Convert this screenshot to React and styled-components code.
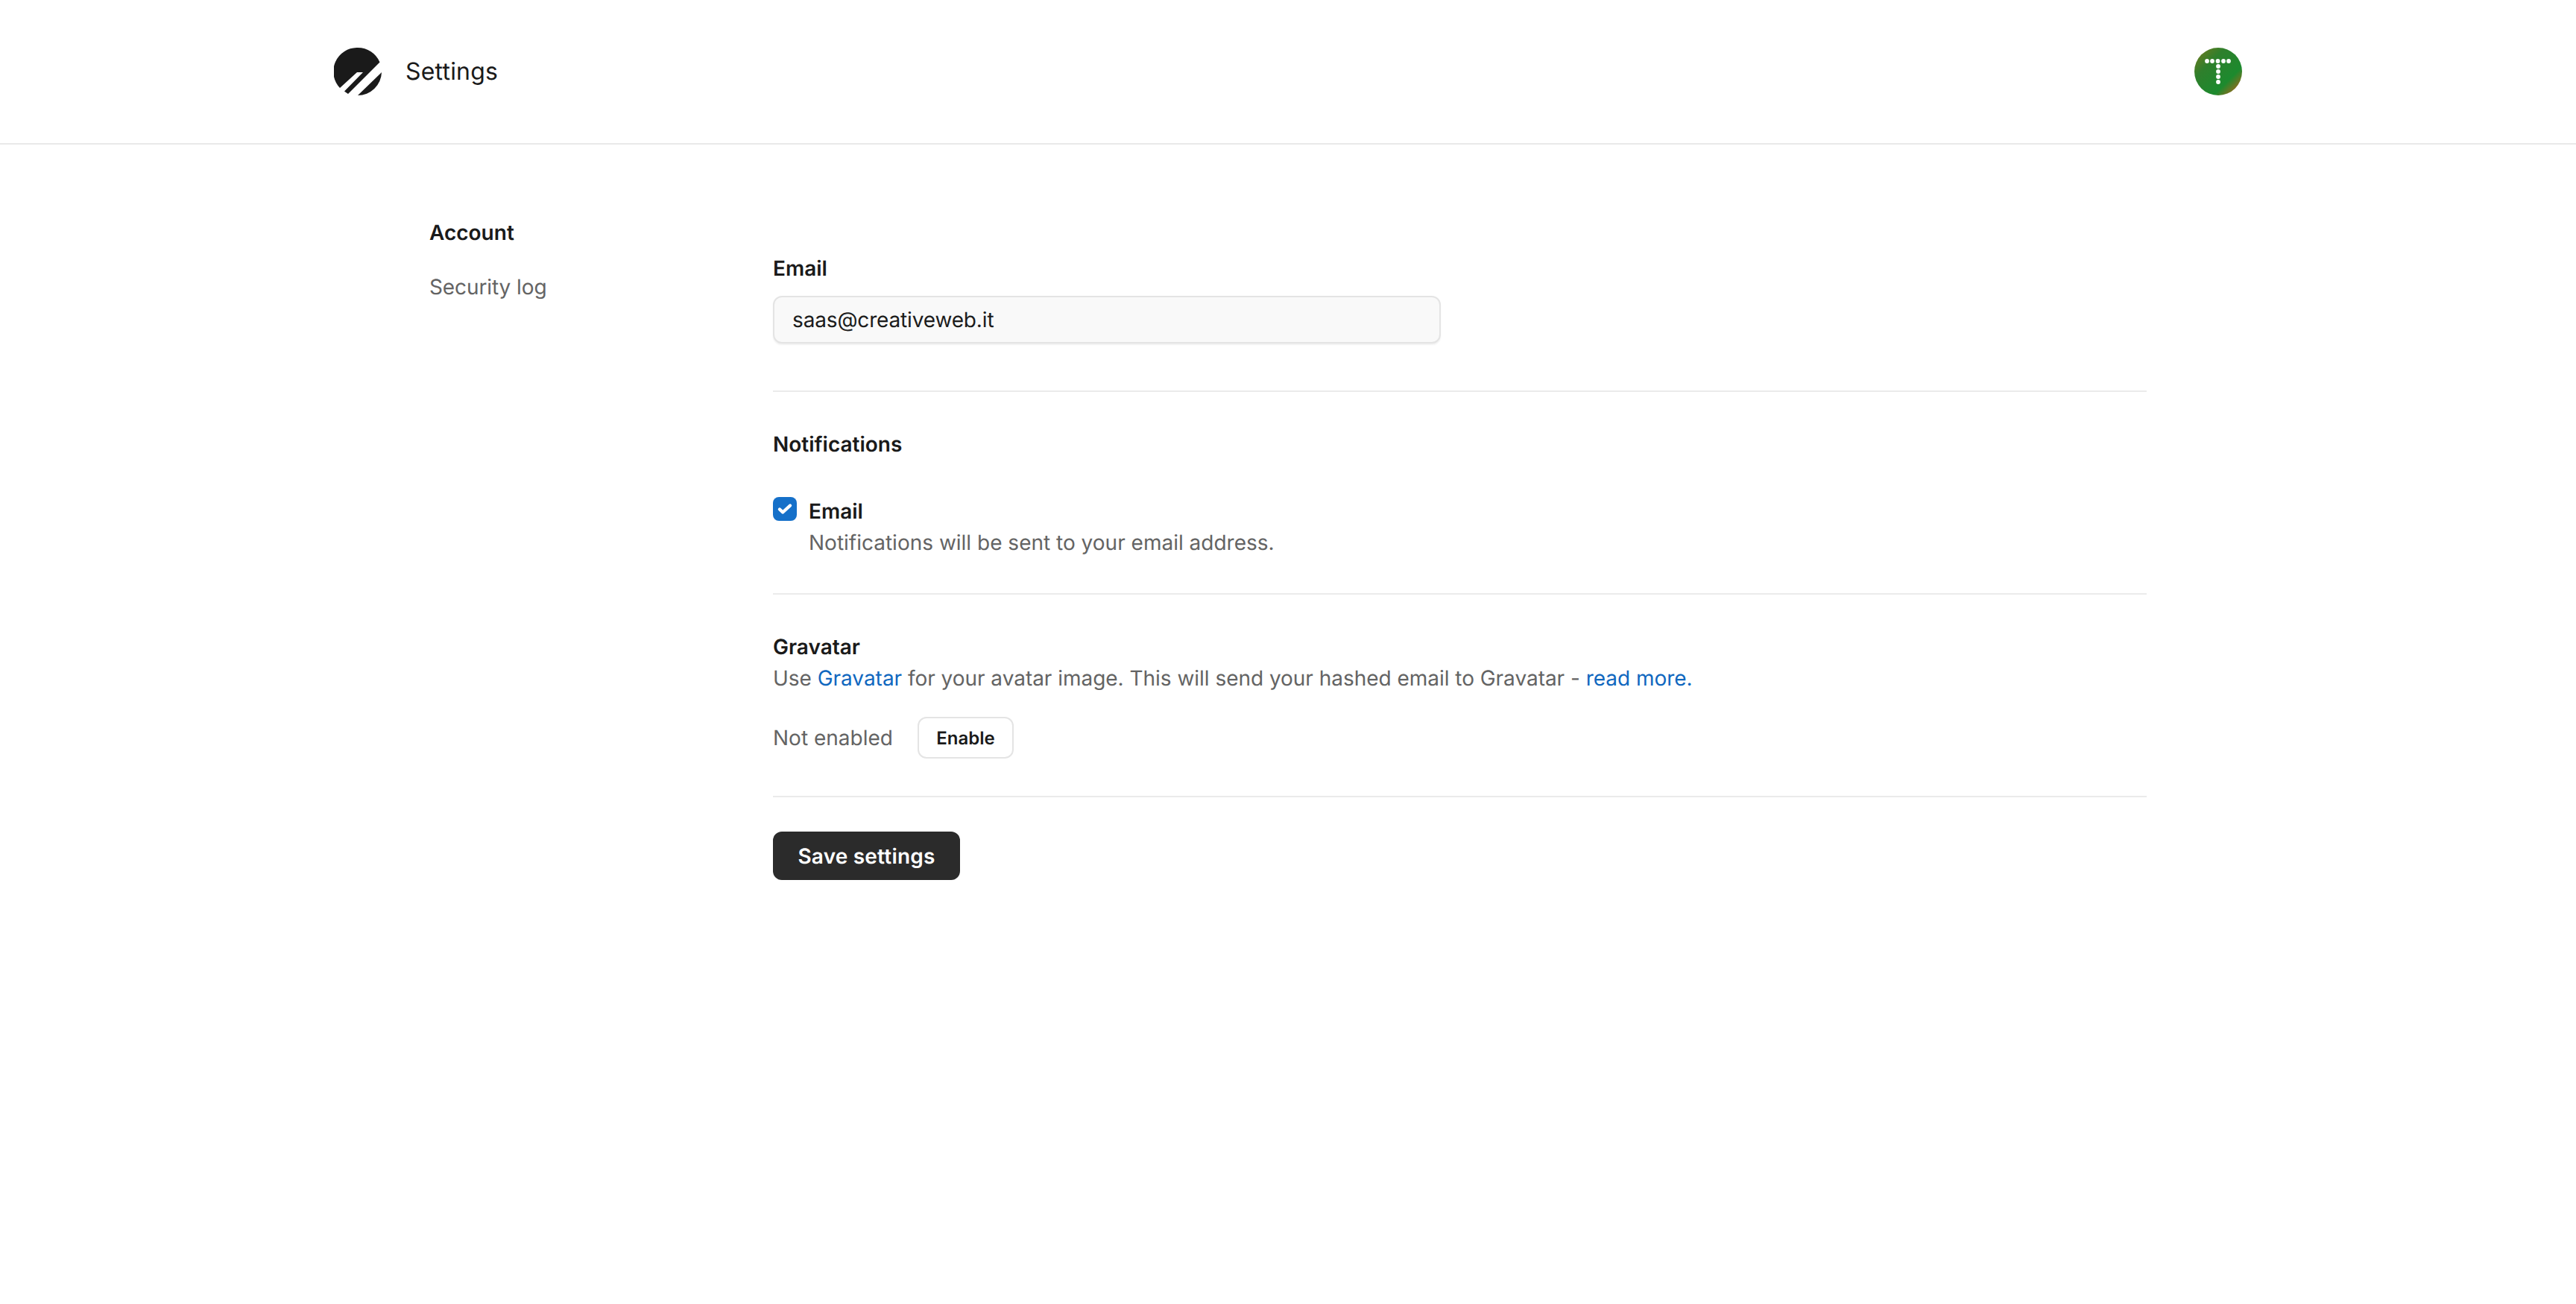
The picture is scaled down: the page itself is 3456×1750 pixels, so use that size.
import React from "react";
import styled, { createGlobalStyle } from "styled-components";

const Global = createGlobalStyle`
  html, body { margin: 0; padding: 0; background: #fff; }
  body { font-family: Inter, "Liberation Sans", sans-serif; color: #1c1c1c; font-size: 28px; line-height: 40px; text-rendering: geometricPrecision; }
  * { box-sizing: border-box; }
`;

const Header = styled.header`
  height: 194px;
  border-bottom: 2px solid #e9e9e9;
  padding: 0 448px;
  display: flex;
  align-items: center;
  justify-content: space-between;
`;
const Brand = styled.div`
  display: flex;
  align-items: center;
  gap: 32px;
`;
const Title = styled.h1`
  margin: 0;
  font-size: 32px;
  line-height: 48px;
  font-weight: 400;
  letter-spacing: 0.2px;
  color: #1a1a1a;
`;
const Main = styled.main`
  display: flex;
  padding: 0 576px;
`;
const Side = styled.nav`
  width: 461px;
  flex: none;
  padding-top: 98px;
  display: flex;
  flex-direction: column;
  gap: 33px;
`;
const SideLink = styled.a`
  font-size: 28px;
  line-height: 40px;
  font-weight: ${(p) => (p.$active ? 600 : 400)};
  letter-spacing: ${(p) => (p.$active ? "0" : "-0.1px")};
  color: ${(p) => (p.$active ? "#1a1a1a" : "#646464")};
`;
const Content = styled.div`
  flex: 1;
  padding-top: 146px;
`;
const Section = styled.section`
  padding-bottom: ${(p) => p.$pb}px;
  margin-bottom: ${(p) => p.$mb}px;
  border-bottom: 2px solid #ebebeb;
`;
const Label = styled.div`
  font-weight: 600;
  font-size: 28px;
  line-height: 40px;
  color: #1a1a1a;
`;
const Input = styled.input`
  display: block;
  width: 896px;
  height: 64px;
  margin-top: 17px;
  padding: 0 24px;
  font: 400 28px Inter, "Liberation Sans", sans-serif;
  letter-spacing: -0.15px;
  text-rendering: geometricPrecision;
  color: #1c1c1c;
  background: #f9f9f9;
  border: 2px solid #e4e4e4;
  border-radius: 12px;
  box-shadow: 0 2px 2px rgba(0, 0, 0, 0.06);
  outline: none;
`;
const CheckRow = styled.div`
  display: flex;
  gap: 16px;
  margin-top: 50px;
`;
const Box = styled.span`
  width: 32px;
  height: 32px;
  flex: none;
  margin-top: 1px;
  border-radius: 8px;
  background: #1570c9;
  display: flex;
  align-items: center;
  justify-content: center;
`;
const Muted = styled.div`
  color: #646464;
  font-size: 28px;
  line-height: 40px;
  margin-top: ${(p) => p.$mt || 0}px;
  letter-spacing: ${(p) => p.$ls || 0}px;
`;
const Link = styled.a`
  color: #1068bf;
`;
const EnableRow = styled.div`
  display: flex;
  align-items: center;
  gap: 33px;
  margin-top: 32px;
`;
const GhostButton = styled.button`
  height: 56px;
  width: 129px;
  padding: 0;
  background: #fff;
  border: 2px solid #e4e4e4;
  border-radius: 12px;
  font: 600 24px Inter, "Liberation Sans", sans-serif;
  text-rendering: geometricPrecision;
  color: #1a1a1a;
`;
const SaveButton = styled.button`
  height: 65px;
  width: 251px;
  padding: 0;
  border: 0;
  border-radius: 12px;
  background: #2b2b2b;
  color: #fff;
  font: 600 28px Inter, "Liberation Sans", sans-serif;
  letter-spacing: 0.2px;
  text-rendering: geometricPrecision;
`;

const Logo = () => (
  <svg width="64" height="64" viewBox="0 0 64 64">
    <path
      fill="#1a1a1a"
      d="M32 0A32 32 0 0 1 61.5 19.5L19 62A32 32 0 0 1 14 58.5L39 33H31L8 54A32 32 0 0 1 32 0Z"
    />
    <path fill="#1a1a1a" d="M64 33A32 32 0 0 1 32 64H32L64 33Z" />
  </svg>
);

const Avatar = () => {
  const dots = [
    [17, 18], [24, 18], [31.5, 18], [39, 18], [46, 18],
    [32, 25], [32, 32], [32, 39], [32, 46],
  ];
  return (
    <svg width="64" height="64" viewBox="0 0 64 64">
      <defs>
        <linearGradient id="av" x1="0" y1="0" x2="1" y2="1">
          <stop offset="0" stopColor="#7a7a1c" />
          <stop offset="0.32" stopColor="#2f7f2c" />
          <stop offset="0.7" stopColor="#1c8a2e" />
          <stop offset="0.92" stopColor="#a8661c" />
        </linearGradient>
      </defs>
      <circle cx="32" cy="32" r="32" fill="url(#av)" />
      {dots.map(([x, y]) => (
        <circle key={`${x}-${y}`} cx={x} cy={y} r="2.9" fill="#fff" />
      ))}
    </svg>
  );
};

export default function App() {
  return (
    <>
      <Global />
      <Header>
        <Brand>
          <Logo />
          <Title>Settings</Title>
        </Brand>
        <Avatar />
      </Header>
      <Main>
        <Side>
          <SideLink $active>Account</SideLink>
          <SideLink>Security log</SideLink>
        </Side>
        <Content>
          <Section $pb={63} $mb={50}>
            <Label>Email</Label>
            <Input readOnly value="saas@creativeweb.it" />
          </Section>
          <Section $pb={48} $mb={50}>
            <Label>Notifications</Label>
            <CheckRow>
              <Box>
                <svg width="22" height="22" viewBox="0 0 22 22">
                  <path d="M4 11.5l4.2 4L18 6.5" fill="none" stroke="#fff" strokeWidth="4.4" strokeLinecap="round" strokeLinejoin="round" />
                </svg>
              </Box>
              <div>
                <Label>Email</Label>
                <Muted $mt={2}>Notifications will be sent to your email address.</Muted>
              </div>
            </CheckRow>
          </Section>
          <Section $pb={50} $mb={46}>
            <Label>Gravatar</Label>
            <Muted $mt={2} $ls={-0.03}>
              Use <Link>Gravatar</Link> for your avatar image. This will send your hashed email to Gravatar - <Link>read more.</Link>
            </Muted>
            <EnableRow>
              <Muted>Not enabled</Muted>
              <GhostButton>Enable</GhostButton>
            </EnableRow>
          </Section>
          <SaveButton>Save settings</SaveButton>
        </Content>
      </Main>
    </>
  );
}
